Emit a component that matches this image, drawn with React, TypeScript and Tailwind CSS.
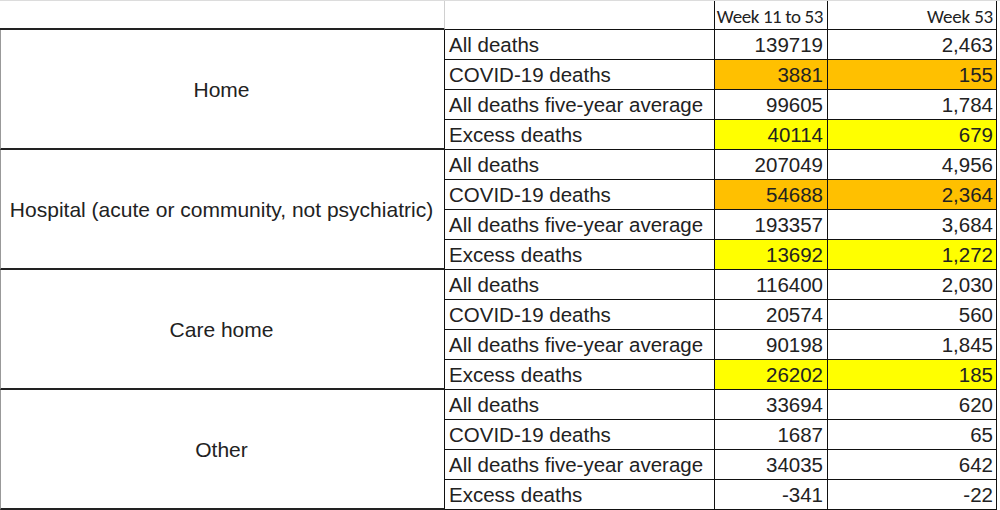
import React from 'react';

type Row = { label: string; a: string; b: string; fill?: 'orange' | 'yellow' };
type Group = { name: string; rows: Row[] };

const groups: Group[] = [
  {
    name: 'Home',
    rows: [
      { label: 'All deaths', a: '139719', b: '2,463' },
      { label: 'COVID-19 deaths', a: '3881', b: '155', fill: 'orange' },
      { label: 'All deaths five-year average', a: '99605', b: '1,784' },
      { label: 'Excess deaths', a: '40114', b: '679', fill: 'yellow' },
    ],
  },
  {
    name: 'Hospital (acute or community, not psychiatric)',
    rows: [
      { label: 'All deaths', a: '207049', b: '4,956' },
      { label: 'COVID-19 deaths', a: '54688', b: '2,364', fill: 'orange' },
      { label: 'All deaths five-year average', a: '193357', b: '3,684' },
      { label: 'Excess deaths', a: '13692', b: '1,272', fill: 'yellow' },
    ],
  },
  {
    name: 'Care home',
    rows: [
      { label: 'All deaths', a: '116400', b: '2,030' },
      { label: 'COVID-19 deaths', a: '20574', b: '560' },
      { label: 'All deaths five-year average', a: '90198', b: '1,845' },
      { label: 'Excess deaths', a: '26202', b: '185', fill: 'yellow' },
    ],
  },
  {
    name: 'Other',
    rows: [
      { label: 'All deaths', a: '33694', b: '620' },
      { label: 'COVID-19 deaths', a: '1687', b: '65' },
      { label: 'All deaths five-year average', a: '34035', b: '642' },
      { label: 'Excess deaths', a: '-341', b: '-22' },
    ],
  },
];

const fillClass = (fill?: Row['fill']) =>
  fill === 'orange' ? 'bg-[#ffc000]' : fill === 'yellow' ? 'bg-[#ffff00]' : 'bg-white';

const DataRow: React.FC<{ row: Row }> = ({ row }) => (
  <div className="grid grid-cols-[270px_113px_169px] h-[30px] border-b border-[#111]">
    <div className="flex items-center pl-[4px] pt-[2px] border-r border-[#111] whitespace-nowrap">{row.label}</div>
    <div className={`flex items-center justify-end pr-[4px] pt-[2px] border-r border-[#111] ${fillClass(row.fill)}`}>{row.a}</div>
    <div className={`flex items-center justify-end pr-[3px] pt-[2px] border-r border-[#111] ${fillClass(row.fill)}`}>{row.b}</div>
  </div>
);

const headFont = { fontFamily: 'Carlito, Lato, "Open Sans", sans-serif' };

const App: React.FC = () => {
  return (
    <div
      className="w-[1000px] h-[510px] overflow-hidden bg-white text-[#222] text-[20.5px] leading-none"
      style={{ fontFamily: '"Liberation Sans", Arial, sans-serif' }}
    >
      <div className="flex h-[30px] border-t border-[#dcdcdc]">
        <div className="w-[445px] border-r border-[#d0d0d0] border-b-2 border-b-[#222]" />
        <div className="w-[270px] border-r border-[#111] border-b border-b-[#111]" />
        <div
          className="w-[113px] flex items-center justify-end pr-[4px] pt-[2px] border-r border-[#111] border-b border-b-[#111] text-[19px] tracking-[-0.4px] whitespace-nowrap"
          style={headFont}
        >
          Week 11 to 53
        </div>
        <div
          className="w-[169px] flex items-center justify-end pr-[3px] pt-[2px] border-r border-[#111] border-b border-b-[#111] text-[19px] tracking-[-0.2px] whitespace-nowrap"
          style={headFont}
        >
          Week 53
        </div>
      </div>
      {groups.map((g) => (
        <div key={g.name} className="flex">
          <div className="w-[445px] h-[120px] flex items-center justify-center pr-[2px] border-l border-l-[#999] border-r border-[#111] border-b-2 border-b-[#222] text-[21px] whitespace-nowrap">
            {g.name}
          </div>
          <div className="flex flex-col">
            {g.rows.map((r) => (
              <DataRow key={r.label} row={r} />
            ))}
          </div>
        </div>
      ))}
    </div>
  );
};

export default App;
